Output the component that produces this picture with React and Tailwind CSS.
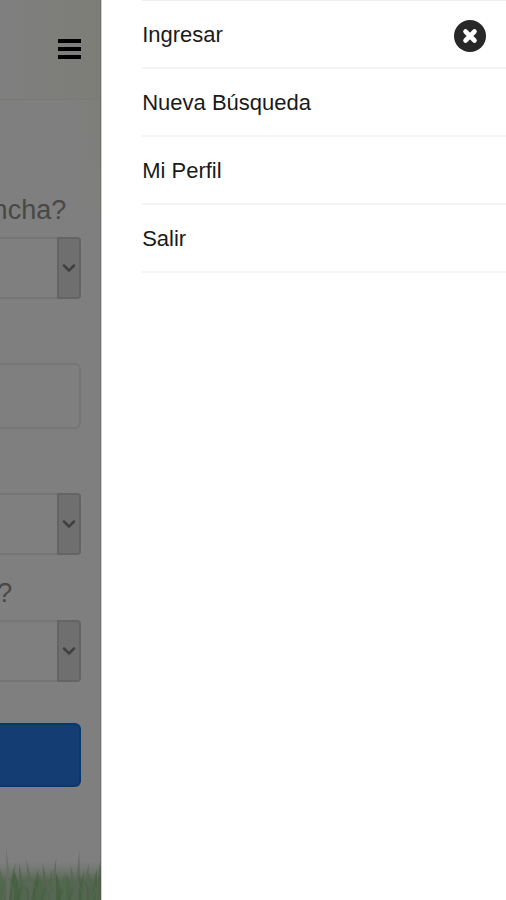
import React from 'react';
import { ChevronDown } from 'lucide-react';

const menuItems = ['Ingresar', 'Nueva Búsqueda', 'Mi Perfil', 'Salir'];

// base x, tip x, tip y, colour of each blade
const blades = [
  [2, 0, 24, '#a6cda0'], [9, 6, 2, '#cddccb'], [12, 16, 17, '#9cc694'], [17, 14, 26, '#8ebd86'],
  [22, 19, 18, '#a0ca98'], [27, 31, 27, '#a9cfa2'], [31, 26, 14, '#b5d0b1'], [36, 39, 24, '#90be86'],
  [41, 38, 28, '#9cca94'], [46, 43, 18, '#a8c8a2'], [50, 53, 24, '#9dcb95'], [54, 57, 12, '#b2cab0'],
  [59, 56, 28, '#8cbb82'], [64, 67, 26, '#a8cea0'], [69, 67, 30, '#98c88f'], [74, 71, 20, '#acccaa'],
  [79, 80, 6, '#b2c8b0'], [82, 86, 26, '#96c48d'], [87, 90, 17, '#b2ccad'], [92, 89, 28, '#a0cc98'],
  [96, 98, 24, '#90bf88'], [100, 101, 16, '#a0c59a'],
];

function Grass() {
  return (
    <svg viewBox="0 0 102 54" preserveAspectRatio="none" className="block h-14 w-full" aria-hidden="true">
      <defs>
        <linearGradient id="ground" x1="0" y1="0" x2="0" y2="1">
          <stop offset="0.3" stopColor="#d0dfcd" stopOpacity="0" />
          <stop offset="0.65" stopColor="#a2cb9a" stopOpacity="0.9" />
          <stop offset="1" stopColor="#98cc8c" />
        </linearGradient>
      </defs>
      <rect width="102" height="54" fill="url(#ground)" />
      {blades.map(([base, tip, top, color]) => (
        <path
          key={base}
          d={`M${base - 3} 54 Q${base - 2} 34 ${tip} ${top} Q${base + 1} 32 ${base + 3} 54Z`}
          fill={color}
          opacity="0.8"
        />
      ))}
      {blades.map(([base, tip, top]) => (
        <path
          key={base}
          d={`M${base + 1} 54 Q${base + 3} 46 ${base * 2 - tip + 2} ${top / 2 + 28}`}
          fill="none"
          stroke={base % 2 ? '#86b87c' : '#b0d8a6'}
          strokeWidth="2"
          opacity="0.5"
        />
      ))}
    </svg>
  );
}

function SelectField({ id, name }) {
  return (
    <div className="grid h-[62px] grid-cols-[1fr_24px]">
      <select
        id={id}
        aria-label={name}
        className="col-span-2 col-start-1 row-start-1 w-full appearance-none rounded-r border-2 border-l-0 border-[#ececec] bg-transparent"
      />
      <span className="pointer-events-none col-start-2 row-start-1 flex items-center justify-center rounded-r border-2 border-[#c8c8c8] bg-[#dedede]">
        <ChevronDown size={20} strokeWidth={3} className="shrink-0 text-[#808080]" />
      </span>
    </div>
  );
}

function SearchPage() {
  return (
    <div className="flex min-h-screen flex-col bg-white">
      <header className="flex h-[100px] items-center justify-end border-b border-[#f6f6ec] bg-linear-to-r from-white to-[#fafaf0] pr-5 pb-px">
        <button type="button" aria-label="Menú" className="flex flex-col gap-1">
          <span className="h-1 w-[23px] bg-black" />
          <span className="h-1 w-[23px] bg-black" />
          <span className="h-1 w-[23px] bg-black" />
        </button>
      </header>

      <form className="flex grow flex-col bg-linear-to-bl from-[#fcfcf2] to-white to-15% pr-5">
        <label htmlFor="cancha" className="mt-[92px] mb-[9px] flex h-9 items-center justify-end pr-[15px] text-[27px] text-[#909090]">
          ncha?
        </label>
        <SelectField id="cancha" />

        <input
          type="text"
          aria-label="Fecha"
          className="mt-16 h-[66px] w-full rounded-r-md border-2 border-l-0 border-[#ececec]"
        />

        <div className="mt-16">
          <SelectField id="hora" name="Hora" />
        </div>

        <label htmlFor="duracion" className="mt-5 mb-[9px] flex h-9 items-center justify-end pr-[69px] text-[27px] text-[#909090]">
          ?
        </label>
        <SelectField id="duracion" />

        <button type="submit" aria-label="Buscar" className="mt-[41px] h-16 w-full rounded-r-md border-2 border-l-0 border-[#1070d8] bg-[#287ce6]" />
      </form>

      <Grass />
    </div>
  );
}

function Drawer() {
  return (
    <nav className="flex min-h-screen grow border-l border-[#d0d0d0] bg-white pl-10">
      <ul className="grow border-t border-[#ececee]">
        {menuItems.map((item, i) => (
          <li key={item} className="flex h-[68px] items-center border-b-2 border-[#f3f4f5] pr-5">
            <a href="#" className="grow text-[22px] text-[#1a1a1a]">
              {item}
            </a>
            {i === 0 && (
              <button type="button" aria-label="Cerrar" className="mt-1 size-8 shrink-0">
                <svg viewBox="0 0 32 32" className="size-8">
                  <circle cx="16" cy="16" r="16" fill="#282828" />
                  <path d="M11.5 11.5l9 9M20.5 11.5l-9 9" stroke="#fff" strokeWidth="4.6" strokeLinecap="round" />
                </svg>
              </button>
            )}
          </li>
        ))}
      </ul>
    </nav>
  );
}

export default function App() {
  return (
    <div className="flex min-h-screen font-['Liberation_Sans',Arial,sans-serif]">
      <div className="relative w-1/5 shrink-0 overflow-hidden">
        <SearchPage />
        <div className="absolute inset-0 border-r border-black/10 bg-black/50" />
      </div>
      <Drawer />
    </div>
  );
}
